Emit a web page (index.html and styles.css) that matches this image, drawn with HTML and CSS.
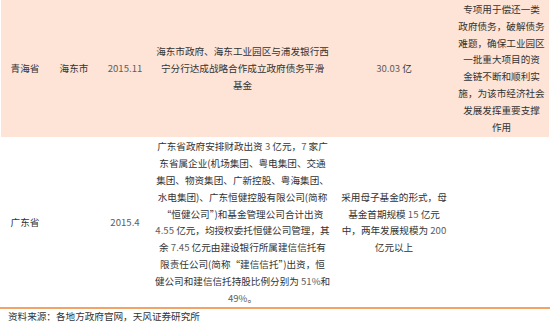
FILE: index.html
```html
<!DOCTYPE html>
<html lang="zh">
<head>
<meta charset="utf-8">
<link rel="stylesheet" href="styles.css">
</head>
<body>
<div class="page">
  <table class="funds">
    <colgroup>
      <col class="c1"><col class="c2"><col class="c3"><col class="c4"><col class="c5"><col class="c6">
    </colgroup>
    <tr class="row-hl">
      <td>青海省</td>
      <td>海东市</td>
      <td class="num">2015.11</td>
      <td>海东市政府、海东工业园区与浦发银行西<br>宁分行达成战略合作成立政府债务平滑<br>基金</td>
      <td><span class="num">30.03</span> 亿</td>
      <td>专项用于偿还一类<br>政府债务，破解债务<br>难题，确保工业园区<br>一批重大项目的资<br>金链不断和顺利实<br>施，为该市经济社会<br>发展发挥重要支撑<br>作用</td>
    </tr>
    <tr class="row-last">
      <td>广东省</td>
      <td></td>
      <td class="num">2015.4</td>
      <td>广东省政府安排财政出资 <span class="num">3</span> 亿元，<span class="num">7</span> 家广<br>东省属企业(机场集团、粤电集团、交通<br>集团、物资集团、广新控股、粤海集团、<br>水电集团)、广东恒健控股有限公司(简称<br>“恒健公司”)和基金管理公司合计出资<br><span class="num">4.55</span> 亿元，均授权委托恒健公司管理，其<br>余 <span class="num">7.45</span> 亿元由建设银行所属建信信托有<br>限责任公司(简称“建信信托”)出资，恒<br>健公司和建信信托持股比例分别为 <span class="num">51%</span>和<br><span class="num">49%</span>。</td>
      <td>采用母子基金的形式，母<br>基金首期规模 <span class="num">15</span> 亿元<br>中，两年发展规模为 <span class="num">200</span><br>亿元以上</td>
      <td></td>
    </tr>
  </table>
  <div class="rule"></div>
  <p class="source">资料来源：各地方政府官网，天风证券研究所</p>
</div>
</body>
</html>
```

FILE: styles.css
```css
html, body {
  margin: 0;
  padding: 0;
  background: #ffffff;
}
.page {
  width: 550px;
  font-family: "Noto Sans CJK SC", "Noto Sans", sans-serif;
  color: #333333;
}
.funds {
  border-collapse: collapse;
  table-layout: fixed;
  width: 548px;
  margin-left: 1px;
  font-size: 9.6px;
  line-height: 16.8px;
}
.c1 { width: 48px; }
.c2 { width: 50px; }
.c3 { width: 52px; }
.c4 { width: 183px; }
.c5 { width: 120px; }
.c6 { width: 95px; }
.funds td {
  padding: 0;
  text-align: center;
  vertical-align: middle;
  white-space: nowrap;
}
.row-hl td {
  background: #fde4d7;
  padding: 1px 0 2px;
}
.num {
  color: #5e5e5e;
}
.row-last td {
  padding: 1px 0 1px;
}
.rule {
  height: 2px;
  background: #f4a366;
}
.source {
  margin: 0;
  padding: 1px 0 0 8px;
  font-size: 9.6px;
  line-height: 12px;
  color: #333;
}
```
